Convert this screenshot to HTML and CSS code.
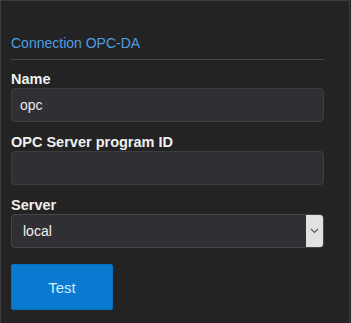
FILE: index.html
```html
<!DOCTYPE html>
<html>
<head>
<meta charset="utf-8">
<link rel="stylesheet" href="styles.css">
</head>
<body>
<div class="panel">
  <div class="title">Connection OPC-DA</div>
  <div class="field">
    <label class="label">Name</label>
    <div class="input">opc</div>
  </div>
  <div class="field">
    <label class="label">OPC Server program ID</label>
    <div class="input"></div>
  </div>
  <div class="field">
    <label class="label">Server</label>
    <div class="select">
      <span class="select-value">local</span>
      <span class="select-btn">
        <svg width="9" height="6" viewBox="0 0 9 6"><path d="M1 1 L4.5 4.5 L8 1" fill="none" stroke="#555" stroke-width="1.1"/></svg>
      </span>
    </div>
  </div>
  <button class="btn">Test</button>
</div>
</body>
</html>
```

FILE: styles.css
```css
html, body {
  margin: 0;
  padding: 0;
  background: #232323;
}
body {
  width: 351px;
  height: 323px;
  overflow: hidden;
  font-family: "Liberation Sans", Arial, sans-serif;
}
.panel {
  box-sizing: border-box;
  width: 350px;
  height: 323px;
  border-top: 1px solid #3c3c3c;
  border-left: 1px solid #3c3c3c;
  border-right: 1px solid #3c3c3c;
  background: #232323;
  padding: 33px 25px 0 10px;
}
.title {
  color: #4d9fe3;
  font-size: 14px;
  line-height: 18px;
  padding-bottom: 7px;
  border-bottom: 1px solid #464646;
  margin-bottom: 11px;
}
.field {
  display: flex;
  flex-direction: column;
}
.label {
  color: #f0f0f0;
  font-weight: bold;
  font-size: 14.5px;
  line-height: 17px;
}
.input {
  box-sizing: border-box;
  height: 34px;
  background: #303034;
  border: 1px solid #3e3e42;
  border-radius: 4px;
  color: #e8e8e8;
  font-size: 14px;
  line-height: 32px;
  padding-left: 8px;
  margin-bottom: 12px;
}
.select {
  box-sizing: border-box;
  height: 34px;
  display: flex;
  background: #303034;
  border: 1px solid #46464a;
  border-radius: 4px;
  overflow: hidden;
  margin-bottom: 16px;
}
.select-value {
  flex: 1;
  color: #f0f0f0;
  font-size: 14px;
  line-height: 32px;
  padding-left: 11px;
}
.select-btn {
  width: 17px;
  background: #e1e1e1;
  display: flex;
  align-items: center;
  justify-content: center;
}
.btn {
  width: 102px;
  height: 46px;
  border: 1px solid #0a6fc0;
  border-radius: 2px;
  background: #0a7ad0;
  color: #d2ecff;
  font-family: "Liberation Sans", Arial, sans-serif;
  font-size: 15px;
  padding: 0;
  display: block;
}
```
